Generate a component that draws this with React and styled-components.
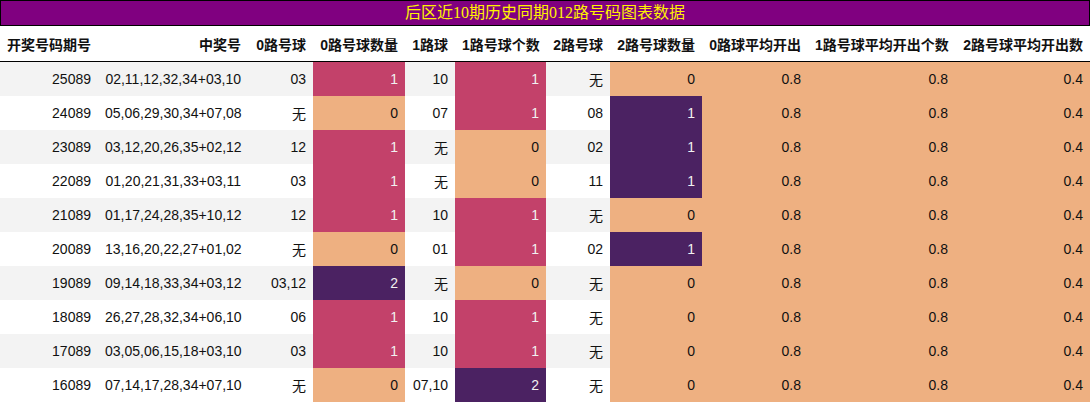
import React from 'react'
import styled, { createGlobalStyle } from 'styled-components'

const GlobalStyle = createGlobalStyle`
body {
  margin:0;
  background:#fff;
}
`;

const Table = styled.table`
width:1090px;
border-collapse:collapse;
table-layout:fixed;
font-family:"Liberation Sans", "Noto Sans CJK SC", sans-serif;
font-size:14px;
color:#111;
`;

const Caption = styled.caption`
height:24px;
line-height:24px;
background:#800080;
color:#fff200;
border:1px solid #000;
font-family:"Liberation Serif", "Noto Sans CJK SC", serif;
font-size:16px;
text-align:center;
`;

const HeadCell = styled.th`
height:35px;
padding:0 7px;
text-align:right;
font-weight:bold;
white-space:nowrap;
border-bottom:1px solid #000;
`;

const Row = styled.tr`
background:${p => (p.$odd ? '#f3f3f3' : '#fff')};
`;

const Cell = styled.td`
height:34px;
padding:0 7px;
text-align:right;
white-space:nowrap;
background:${p => p.$bg || 'transparent'};
color:${p => p.$light ? '#f1f1f1' : '#111'};
`;

const widths = [98, 150, 65, 92, 50, 91, 64, 92, 106, 147, 135];
const heads = ['开奖号码期号', '中奖号', '0路号球', '0路号球数量', '1路球', '1路号球个数', '2路号球', '2路号球数量', '0路球平均开出', '1路号球平均开出个数', '2路号球平均开出数'];

const rows = [
  ['25089', '02,11,12,32,34+03,10', '03', 1, '10', 1, '无', 0],
  ['24089', '05,06,29,30,34+07,08', '无', 0, '07', 1, '08', 1],
  ['23089', '03,12,20,26,35+02,12', '12', 1, '无', 0, '02', 1],
  ['22089', '01,20,21,31,33+03,11', '03', 1, '无', 0, '11', 1],
  ['21089', '01,17,24,28,35+10,12', '12', 1, '10', 1, '无', 0],
  ['20089', '13,16,20,22,27+01,02', '无', 0, '01', 1, '02', 1],
  ['19089', '09,14,18,33,34+03,12', '03,12', 2, '无', 0, '无', 0],
  ['18089', '26,27,28,32,34+06,10', '06', 1, '10', 1, '无', 0],
  ['17089', '03,05,06,15,18+03,10', '03', 1, '10', 1, '无', 0],
  ['16089', '07,14,17,28,34+07,10', '无', 0, '07,10', 2, '无', 0],
];

const palette = ['#eeb081', '#c3416a', '#4b2262'];
const low = palette[0];

// each count column is coloured against its own max
const colMax = [3, 5, 7].reduce((m, c) => ({ ...m, [c]: Math.max(...rows.map(r => r[c])) }), {});

function CountCell({ n, max }) {
  const level = max === 0 ? 0 : Math.round((n / max) * 2);
  return <Cell $bg={palette[level]} $light={level > 0}>{n}</Cell>;
}

export default function App() {
  return (
    <>
      <GlobalStyle />
      <Table>
        <Caption>后区近10期历史同期012路号码图表数据</Caption>
        <colgroup>
          {widths.map((w, i) => <col key={i} style={{ width: w }} />)}
        </colgroup>
        <thead>
          <tr>
            {heads.map(h => <HeadCell key={h}>{h}</HeadCell>)}
          </tr>
        </thead>
        <tbody>
          {rows.map((r, i) => (
            <Row key={r[0]} $odd={i % 2 === 0}>
              <Cell>{r[0]}</Cell>
              <Cell>{r[1]}</Cell>
              <Cell>{r[2]}</Cell>
              <CountCell n={r[3]} max={colMax[3]} />
              <Cell>{r[4]}</Cell>
              <CountCell n={r[5]} max={colMax[5]} />
              <Cell>{r[6]}</Cell>
              <CountCell n={r[7]} max={colMax[7]} />
              <Cell $bg={low}>0.8</Cell>
              <Cell $bg={low}>0.8</Cell>
              <Cell $bg={low}>0.4</Cell>
            </Row>
          ))}
        </tbody>
      </Table>
    </>
  )
}
